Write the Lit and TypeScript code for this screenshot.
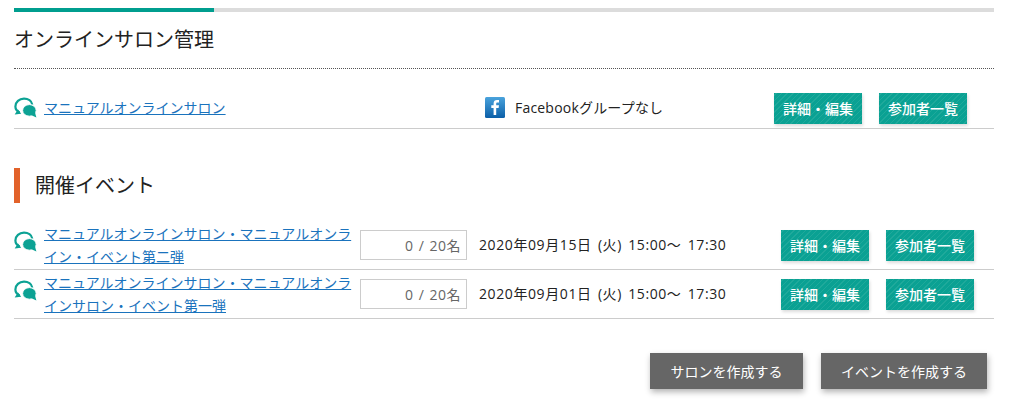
import { LitElement, html, css } from "lit";
import { customElement } from "lit/decorators.js";

const chat = html`<svg class="chat" width="24" height="22" viewBox="0 0 24 22">
  <path d="M5.500 15.500C2.800 14 1.400 12 1.400 9.500 1.400 5 5.300 1.600 10 1.600c4.200 0 7.600 2.400 8.300 6" fill="none" stroke="#0ca294" stroke-width="2.200"/>
  <path d="M.6 17.400l6.600-.6-3.200-4.200z" fill="#0ca294"/>
  <ellipse cx="15.400" cy="13.400" rx="6.800" ry="5.800" fill="#0ca294" stroke="#fff" stroke-width="1"/>
  <path d="M17 18l5.400 2.600-1.600-5.600z" fill="#0ca294"/>
</svg>`;

const fb = html`<svg width="20" height="21" viewBox="0 0 20 21">
  <defs><linearGradient id="fbg" x1="0" y1="0" x2="0" y2="1"><stop offset="0" stop-color="#4aa3dc"/><stop offset="1" stop-color="#0b5fa8"/></linearGradient></defs>
  <rect width="20" height="21" rx="1.500" fill="url(#fbg)"/>
  <path d="M11.200 18V11h2.400l.4-2.700h-2.800V6.700c0-.8.3-1.300 1.400-1.300H14V3.100c-.3 0-1.100-.1-2-.1-2.100 0-3.400 1.200-3.400 3.400v1.900H6.300V11h2.300v7z" fill="#fff"/>
</svg>`;

@customElement("app-root")
export class AppRoot extends LitElement {
  static styles = css`
    :host {
      display: block;
      padding: 8px 20px 0 14px;
      font-family: "Open Sans", "Noto Sans CJK JP", sans-serif;
      font-size: 14px;
      color: #222;
      background: #fff;
      height: 397px;
      overflow: hidden;
    }
    .progress { height: 4px; background: #dcdcdc; }
    .progress div { width: 200px; height: 4px; background: #009e8f; }
    h1 {
      margin: 0; font-weight: 400; font-size: 20px; line-height: 56px; height: 56px;
      border-bottom: 1px dotted #555; color: #222;
    }
    a { color: #1a73bd; text-decoration: underline; }
    .salon {
      display: flex; align-items: center; height: 39px; padding-top: 20px;
      border-bottom: 1px solid #ccc;
    }
    .salon .name { width: 471px; display: flex; align-items: center; gap: 6px; }
    .salon svg { margin-top: -2px; }
    .salon .name a, .fb span { margin-top: -4px; }
    .fb { display: flex; align-items: center; gap: 10px; width: 289px; }
    .fb span { letter-spacing: .2px; }
    .btns { display: flex; }
    .btn {
      width: 88px; height: 31px; display: flex; align-items: center; justify-content: center;
      color: #fff; font-size: 14px; font-weight: 500; white-space: nowrap;
      background: repeating-linear-gradient(-45deg, #0aa193 0 2px, #1fa99b 2px 3px, #0aa193 3px 4px);
      box-shadow: 1px 2px 3px rgba(0,0,0,.14);
    }
    .salon .btns { gap: 17px; margin-top: -1px; }
    h2 {
      margin: 39px 0 18px; font-weight: 400; font-size: 20px; height: 35px; line-height: 36px;
      border-left: 6px solid #e2622a; padding-left: 15px; color: #222;
    }
    .ev {
      display: flex; align-items: center; height: 48px;
      border-bottom: 1px solid #ccc;
    }
    .ev .title { width: 346px; display: flex; align-items: flex-start; gap: 6px; }
    .ev .title .chat { flex: none; margin-top: 9px; }
    .ev .title a { width: 316px; line-height: 23px; display: block; }
    .count {
      box-sizing: border-box; width: 107px; height: 30px; border: 1px solid #ccc;
      display: flex; align-items: center; justify-content: flex-end; padding-right: 5px; color: #666;
      letter-spacing: .5px; word-spacing: 1px;
    }
    .date {
      width: 314px; padding-left: 12px; box-sizing: border-box; white-space: nowrap; margin-top: -2px;
      letter-spacing: .6px; word-spacing: 2px;
    }
    .ev .btns { gap: 17px; }
    .actions { display: flex; justify-content: flex-end; gap: 18px; margin: 34px 7px 0 0; }
    .big {
      height: 36px; display: flex; align-items: center; justify-content: center;
      background: #666; color: #fff; font-size: 14px;
      box-shadow: 1px 3px 6px rgba(0,0,0,.3);
    }
    .big.a { width: 153px; }
    .big.b { width: 166px; }
  `;

  private event(lines: string, date: string) {
    return html`<div class="ev">
      <div class="title">${chat}<a href="#">${lines}</a></div>
      <div class="count">0 / 20名</div>
      <div class="date">${date}</div>
      <div class="btns"><div class="btn">詳細・編集</div><div class="btn">参加者一覧</div></div>
    </div>`;
  }

  render() {
    return html`
      <div class="progress"><div></div></div>
      <h1>オンラインサロン管理</h1>
      <div class="salon">
        <div class="name">${chat}<a href="#">マニュアルオンラインサロン</a></div>
        <div class="fb">${fb}<span>Facebookグループなし</span></div>
        <div class="btns"><div class="btn">詳細・編集</div><div class="btn">参加者一覧</div></div>
      </div>
      <h2>開催イベント</h2>
      ${this.event("マニュアルオンラインサロン・マニュアルオンライン・イベント第二弾", "2020年09月15日 (火) 15:00〜 17:30")}
      ${this.event("マニュアルオンラインサロン・マニュアルオンラインサロン・イベント第一弾", "2020年09月01日 (火) 15:00〜 17:30")}
      <div class="actions">
        <div class="big a">サロンを作成する</div>
        <div class="big b">イベントを作成する</div>
      </div>
    `;
  }
}
